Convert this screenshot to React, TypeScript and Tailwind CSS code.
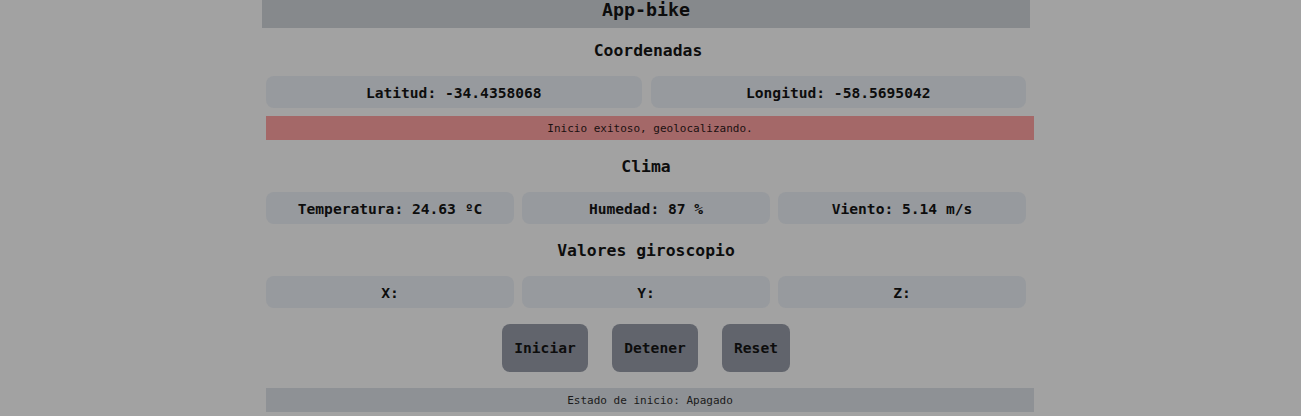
import React from "react";

const mono = { fontFamily: '"DejaVu Sans Mono", "Liberation Mono", monospace' };

function Box({ children }: { children: React.ReactNode }) {
  return (
    <div className="flex h-[32px] flex-1 items-center justify-center rounded-lg bg-[#979a9e] pt-[1px] text-[14.6px] font-bold text-[#0d0d0d]">
      {children}
    </div>
  );
}

function Heading({ children, h }: { children: React.ReactNode; h: string }) {
  return (
    <div className={`flex items-center justify-center pt-[2px] text-[16.4px] font-bold text-[#0d0d0d] ${h}`}>
      {children}
    </div>
  );
}

export default function App() {
  return (
    <div className="min-h-screen w-full bg-[#a2a2a2]" style={mono}>
      <div className="ml-[262px] w-[768px]">
        <div className="h-[28px] bg-[#86898c] text-center text-[18.3px] font-bold leading-[20px] text-[#0d0d0d]">
          App-bike
        </div>
        <div className="pl-[4px]">
          <Heading h="h-[44px]">Coordenadas</Heading>
          <div className="mt-[4px] flex w-[760px] gap-[9px]">
            <Box>Latitud: -34.4358068</Box>
            <Box>Longitud: -58.5695042</Box>
          </div>
          <div className="mt-[8px] flex h-[24px] w-[768px] items-center justify-center bg-[#a46868] pt-[2px] text-[11px] text-[#1a1010]">
            Inicio exitoso, geolocalizando.
          </div>
          <div className="w-[760px]">
            <Heading h="h-[52px]">Clima</Heading>
            <div className="flex gap-[8px]">
              <Box>Temperatura: 24.63 ºC</Box>
              <Box>Humedad: 87 %</Box>
              <Box>Viento: 5.14 m/s</Box>
            </div>
            <Heading h="h-[52px]">Valores giroscopio</Heading>
            <div className="flex gap-[8px]">
              <Box>X:</Box>
              <Box>Y:</Box>
              <Box>Z:</Box>
            </div>
            <div className="mt-[16px] flex justify-center gap-[24px]">
              <button className="h-[48px] w-[86px] rounded-lg bg-[#61646c] text-[14.6px] font-bold text-[#0d0d0d]">
                Iniciar
              </button>
              <button className="h-[48px] w-[86px] rounded-lg bg-[#61646c] text-[14.6px] font-bold text-[#0d0d0d]">
                Detener
              </button>
              <button className="h-[48px] w-[68px] rounded-lg bg-[#61646c] text-[14.6px] font-bold text-[#0d0d0d]">
                Reset
              </button>
            </div>
          </div>
          <div className="mt-[16px] flex h-[24px] w-[768px] items-center justify-center bg-[#8e9195] pt-[2px] text-[11px] text-[#1a1a1a]">
            Estado de inicio: Apagado
          </div>
        </div>
      </div>
    </div>
  );
}
